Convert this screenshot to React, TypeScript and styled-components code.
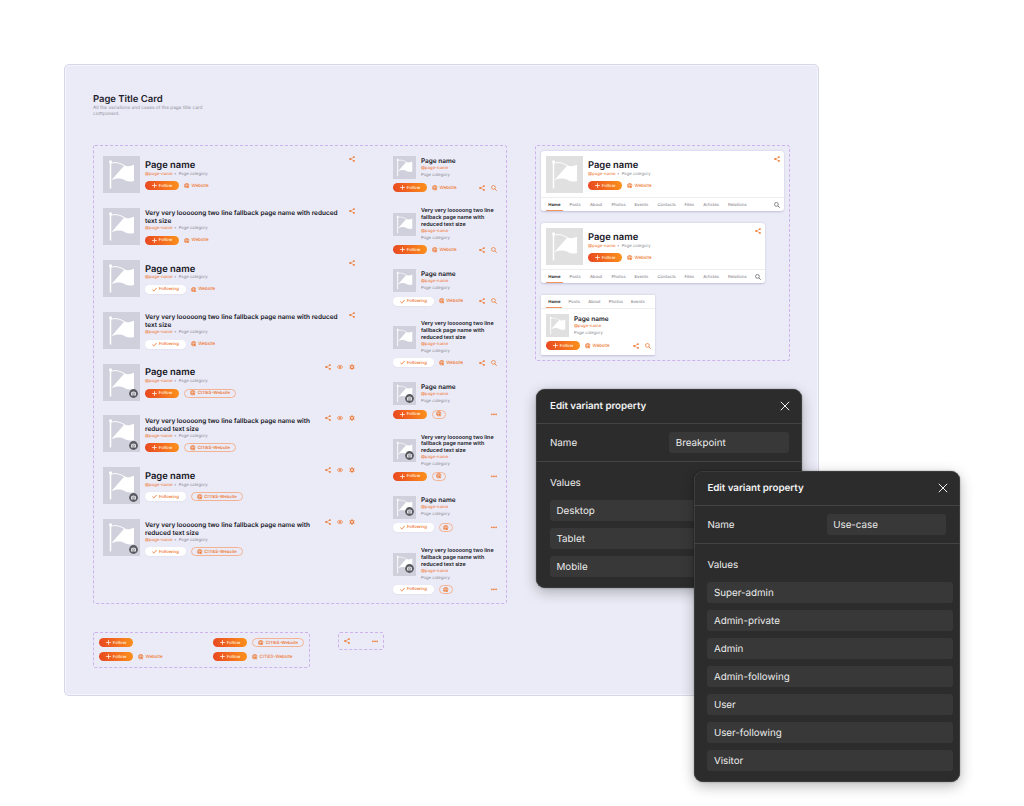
import React from "react";
import styled, { createGlobalStyle, css } from "styled-components";

const GlobalStyle = createGlobalStyle`
  body {
    margin: 0;
    background: #ffffff;
    font-family: Inter, "Liberation Sans", sans-serif;
    text-rendering: geometricPrecision;
    -webkit-font-smoothing: antialiased;
  }

  * {
    box-sizing: border-box;
  }

  svg {
    display: block;
    flex: none;
  }
`;

// layout

const Stage = styled.div`
  position: relative;
  width: 1024px;
  height: 806px;
  padding: 64px 0 0 64px;
  overflow: hidden;
`;

const Board = styled.div`
  display: flex;
  flex-direction: column;
  width: 755px;
  height: 632px;
  padding: 29px 28px 0 28px;
  border: 1px solid #d6d5ea;
  border-radius: 5px;
  background: #ebebf7;
  box-shadow: inset 0 0 0 1px #f4f4fb;
`;

const BoardTitle = styled.h1`
  margin: 0;
  font-size: 9.5px;
  line-height: 11px;
  font-weight: 600;
  letter-spacing: -0.03px;
  color: #22222c;
`;

const BoardText = styled.p`
  margin: 0;
  width: 120px;
  height: 40px;
  font-size: 4.75px;
  line-height: 6.2px;
  color: #8f8f9a;
`;

const FrameRow = styled.div<{ $gap: number }>`
  display: flex;
  align-items: flex-start;
  gap: ${(p) => p.$gap}px;
`;

const FrameStack = styled.div`
  display: flex;
  flex-direction: column;
  gap: 28px;
`;

const Frame = styled.div<{ $width: number; $height: number; $pad: string }>`
  position: relative;
  display: flex;
  width: ${(p) => p.$width}px;
  height: ${(p) => p.$height}px;
  padding: ${(p) => p.$pad};
`;

const DashedEdge = styled.svg`
  position: absolute;
  inset: 0;
`;

// page title card

const DesktopColumn = styled.div`
  display: flex;
  flex-direction: column;
  gap: 14.9px;
  width: 252px;
`;

const MobileColumn = styled.div`
  display: flex;
  flex-direction: column;
  gap: 14.8px;
  width: 103.5px;
  margin-left: 38px;
`;

const DesktopRow = styled.div`
  display: flex;
  width: 100%;
  height: 37px;
`;

const AvatarBox = styled.div<{ $size: number; $grey?: boolean }>`
  position: relative;
  flex: none;
  width: ${(p) => p.$size}px;
  height: ${(p) => p.$size}px;
  background: ${(p) => (p.$grey ? "#e0e0e0" : "#d0d0dd")};
`;

const CameraBadge = styled.div<{ $offset: number }>`
  position: absolute;
  right: ${(p) => p.$offset}px;
  bottom: ${(p) => p.$offset}px;
`;

const DesktopInfo = styled.div<{ $long?: boolean }>`
  display: flex;
  flex-direction: column;
  flex: 1;
  margin-left: 5px;
  padding-top: ${(p) => (p.$long ? 1.3 : 3.8)}px;
`;

const DesktopName = styled.div<{ $long?: boolean }>`
  color: #14141c;
  font-weight: 600;
  white-space: pre;

  ${(p) =>
    p.$long
      ? css`
          margin-bottom: 0.9px;
          font-size: 6.48px;
          line-height: 8px;
        `
      : css`
          font-size: 9.4px;
          line-height: 11.5px;
        `}
`;

const Meta = styled.div`
  display: flex;
  height: 6px;
  margin-bottom: 3.7px;
  padding-top: 0.4px;
  font-size: 4.2px;
  line-height: 6px;
  color: #85858f;
  white-space: nowrap;
`;

const Handle = styled.span`
  width: 29px;
  letter-spacing: 0.02px;
  font-weight: 500;
  color: #f0803c;
`;

const Bullet = styled.span`
  width: 4.7px;
`;

const Actions = styled.div`
  display: flex;
  align-items: center;
  gap: 4.8px;
  height: 9.2px;
`;

const Pill = styled.div<{ $kind: "follow" | "following" | "outline"; $width: number }>`
  display: flex;
  align-items: center;
  justify-content: center;
  gap: 1.8px;
  flex: none;
  width: ${(p) => p.$width}px;
  height: 9px;
  border-radius: 5px;
  font-size: 4.3px;
  line-height: 6px;
  font-weight: 600;
  color: #ee7a35;
  white-space: nowrap;

  ${(p) =>
    p.$kind === "follow" &&
    css`
      color: #ffe9da;
      background: linear-gradient(75deg, #e84a20 5%, #f36b1f 50%, #fb8f1c 95%);
    `}

  ${(p) =>
    p.$kind === "following" &&
    css`
      background: #ffffff;
      box-shadow: 0 0.5px 1px rgba(60, 60, 120, 0.08);
    `}

  ${(p) =>
    p.$kind === "outline" &&
    css`
      border: 1px solid #f3b393;
    `}
`;

const SiteLink = styled.div`
  display: flex;
  align-items: center;
  gap: 1.9px;
  font-size: 4.4px;
  line-height: 6px;
  font-weight: 500;
  color: #ee7a35;
  white-space: nowrap;
`;

const Label = styled.span`
  padding-top: 2.1px;
`;

const IconRow = styled.div`
  display: flex;
  flex: none;
  align-items: center;
  gap: 6px;
  height: 6px;
  color: #ee7a35;
`;

const Spacer = styled.div`
  flex: 1;
`;

const MobileTop = styled.div<{ $long?: boolean }>`
  display: flex;
  align-items: center;
  gap: 5px;
  margin-bottom: ${(p) => (p.$long ? 3.2 : 4.3)}px;
`;

const MobileName = styled.div<{ $long?: boolean }>`
  margin: ${(p) => (p.$long ? "0.9px 0 -0.9px" : "0")};
  font-size: ${(p) => (p.$long ? 5.38 : 6.45)}px;
  line-height: ${(p) => (p.$long ? 6.9 : 8)}px;
  font-weight: 600;
  color: #14141c;
  white-space: pre;
`;

const MobileMeta = styled.div<{ $orange?: boolean }>`
  font-size: 4.2px;
  line-height: 7px;
  font-weight: ${(p) => (p.$orange ? 500 : 400)};
  color: ${(p) => (p.$orange ? "#f0803c" : "#85858f")};
`;

// cards with tabs

const CardColumn = styled.div`
  display: flex;
  flex-direction: column;
  gap: 12px;
`;

const Card = styled.div<{ $width: number; $square?: boolean }>`
  display: flex;
  flex-direction: column;
  width: ${(p) => p.$width}px;
  height: 60px;
  border-radius: ${(p) => (p.$square ? 1 : 3)}px;
  background: #ffffff;
  box-shadow: 0 0.5px 2px rgba(70, 60, 130, 0.25);
`;

const CardBody = styled.div`
  display: flex;
  height: 46px;
  padding: 5px 4.5px 0 5px;
`;

const Tabs = styled.div<{ $bottom?: boolean }>`
  display: flex;
  height: 14px;
  padding: 0 4.5px 0 5px;
  border-top: ${(p) => (p.$bottom ? "none" : "1px solid #eeeef0")};
  border-bottom: ${(p) => (p.$bottom ? "1px solid #eeeef0" : "none")};
`;

const Tab = styled.div<{ $active?: boolean; $width: number }>`
  width: ${(p) => p.$width}px;
  padding: 1px 0 0 2.3px;
  font-size: 4.2px;
  line-height: 13.8px;
  font-weight: ${(p) => (p.$active ? 700 : 500)};
  letter-spacing: 0.06px;
  color: ${(p) => (p.$active ? "#2a2a30" : "#85858c")};
  border-bottom: 1px solid ${(p) => (p.$active ? "#f0935f" : "transparent")};
`;

const TabGap = styled.div`
  width: 4.7px;
`;

const TabSearch = styled.div`
  display: flex;
  align-items: center;
  margin-left: auto;
  color: #66666c;
`;

const MobileCardBody = styled.div`
  padding: 5px 4px 0 5px;
`;

// dialogs

const Dialog = styled.section<{ $x: number; $y: number; $height: number }>`
  position: absolute;
  left: ${(p) => p.$x}px;
  top: ${(p) => p.$y}px;
  width: 266px;
  height: ${(p) => p.$height}px;
  border-radius: 9px;
  background: #2c2c2c;
  color: #ececec;
  font-size: 9.8px;
  box-shadow: inset 0 0 0 0.6px #4a4a4a, 0 0 2px rgba(0, 0, 0, 0.35),
    0 4px 14px rgba(0, 0, 0, 0.28);
`;

const DialogHeader = styled.header`
  display: flex;
  align-items: center;
  justify-content: space-between;
  height: 35px;
  padding: 0 12px 0 13.7px;
  border-bottom: 1px solid #444444;
  font-weight: 600;
  letter-spacing: -0.04px;
  color: #f2f2f2;
`;

const DialogLabel = styled.span`
  padding-top: 1px;
`;

const DialogName = styled.div`
  display: flex;
  align-items: center;
  justify-content: space-between;
  height: 38px;
  padding: 0 13.5px 0 13.7px;
  border-bottom: 1px solid #444444;
`;

const Field = styled.div<{ $width?: number }>`
  width: ${(p) => (p.$width ? `${p.$width}px` : "auto")};
  height: 21px;
  padding-left: 6.5px;
  border-radius: 3px;
  background: #383838;
  line-height: 23.6px;
`;

const DialogValues = styled.div`
  display: flex;
  flex-direction: column;
  gap: 7px;
  padding: 15px 7px 0 13.7px;
`;

const ValuesLabel = styled.div`
  height: 16px;
  line-height: 14.4px;
`;

// icons

const ShareIcon = () => (
  <svg width="6" height="6" viewBox="0 0 12 12" fill="currentColor">
    <path d="M10 2.2 2.4 6 10 9.8" fill="none" stroke="currentColor" strokeWidth="1.2" />
    <circle cx="9.8" cy="2.2" r="1.9" />
    <circle cx="2.2" cy="6" r="1.9" />
    <circle cx="9.8" cy="9.8" r="1.9" />
  </svg>
);

const SearchIcon = () => (
  <svg width="6" height="6" viewBox="0 0 12 12" fill="none" stroke="currentColor">
    <circle cx="4.8" cy="4.8" r="3.8" strokeWidth="1.5" />
    <path d="m7.5 7.5 4 4" strokeWidth="1.7" />
  </svg>
);

const EyeIcon = () => (
  <svg width="6" height="6" viewBox="0 0 12 12">
    <path
      d="M.7 6C3 1.6 9 1.6 11.3 6 9 10.4 3 10.4.7 6z"
      fill="none"
      stroke="currentColor"
      strokeWidth="1.5"
    />
    <circle cx="6" cy="6" r="1.9" fill="currentColor" />
  </svg>
);

const GearIcon = () => (
  <svg width="6" height="6" viewBox="0 0 12 12" fill="none" stroke="currentColor">
    <circle cx="6" cy="6" r="3.1" strokeWidth="2.3" />
    <path
      d="M6 .5v2M6 9.5v2M1.2 3.2 3 4.3M9 7.7l1.8 1.1M1.2 8.8 3 7.7M9 4.3l1.8-1.1"
      strokeWidth="2.2"
    />
  </svg>
);

const MoreIcon = () => (
  <svg width="6" height="6" viewBox="0 0 12 12" fill="currentColor">
    <circle cx="1.8" cy="6.6" r="1.7" />
    <circle cx="6" cy="6.6" r="1.7" />
    <circle cx="10.2" cy="6.6" r="1.7" />
  </svg>
);

const GlobeIcon = () => (
  <svg width="5.5" height="5.5" viewBox="0 0 12 12">
    <path
      d="M6 .8a5.2 5.2 0 1 0 0 10.4M6 .8a5.2 5.2 0 0 1 5.2 5.2M1 4.2h9.8M1 7.6h5M6 .8C3 4 3 8 5.6 11.2M6 .8c1.6 1.4 2.3 3 2.4 5"
      fill="none"
      stroke="currentColor"
      strokeWidth="1.3"
    />
    <path d="m5.6 5.6 6 2.2-2.3 1.1 2 2-1 1-2-2-1 2.1z" fill="currentColor" />
  </svg>
);

const PlusIcon = () => (
  <svg width="5" height="5" viewBox="0 0 10 10" stroke="currentColor" strokeWidth="1.7">
    <path d="M5 .3v9.4M.3 5h9.4" />
  </svg>
);

const CheckIcon = () => (
  <svg width="5" height="5" viewBox="0 0 10 10" fill="none" stroke="currentColor">
    <path d="m.8 5.4 2.8 2.7 5.6-6.2" strokeWidth="1.8" />
  </svg>
);

const CloseIcon = () => (
  <svg width="10" height="10" viewBox="0 0 10 10" stroke="#f0f0f0" strokeWidth="1">
    <path d="m.8.8 8.4 8.4M9.2.8.8 9.2" />
  </svg>
);

const FlagIcon = ({ size }: { size: number }) => (
  <svg width={size} height={size} viewBox="0 0 37 37">
    <path d="M7.5 5v27.5" stroke="#fff" strokeWidth="1.5" />
    <circle cx="7.5" cy="5.8" r="1.5" fill="#fff" />
    <path
      d="M8 7.4C12.5 5.6 17 7 22 10"
      fill="none"
      stroke="#fff"
      strokeWidth="1"
    />
    <path
      d="M21.3 9.6C24.5 11 28 10 31 8.7v16.2c-3.2 1-5.8.8-8.6-.5C18 22 13.5 22 8.2 24.6z"
      fill="#fff"
    />
  </svg>
);

const CameraIcon = () => (
  <svg width="9" height="9" viewBox="0 0 18 18">
    <circle cx="9" cy="9" r="8.8" fill="#595a60" />
    <path d="M4 6.4h2.3l1-1.5h3.4l1 1.5H14v6.8H4z" fill="#dedee4" />
    <circle cx="9" cy="9.6" r="2" fill="#dedee4" stroke="#595a60" strokeWidth="1" />
  </svg>
);

// components

type TitleProps = {
  long?: boolean;
  following?: boolean;
  admin?: boolean;
  grey?: boolean;
};

const Avatar = ({ size, admin, grey }: { size: number; admin?: boolean; grey?: boolean }) => (
  <AvatarBox $size={size} $grey={grey}>
    <FlagIcon size={size} />
    {admin && (
      <CameraBadge $offset={size > 30 ? 2.4 : 2.2}>
        <CameraIcon />
      </CameraBadge>
    )}
  </AvatarBox>
);

const FollowButton = ({ following }: { following?: boolean }) =>
  following ? (
    <Pill $kind="following" $width={41}>
      <CheckIcon />
      <Label>Following</Label>
    </Pill>
  ) : (
    <Pill $kind="follow" $width={34.3}>
      <PlusIcon />
      <Label>Follow</Label>
    </Pill>
  );

const Website = ({ label = "Website" }: { label?: string }) => (
  <SiteLink>
    <GlobeIcon />
    <Label>{label}</Label>
  </SiteLink>
);

const CitiesButton = () => (
  <Pill $kind="outline" $width={52.3}>
    <GlobeIcon />
    <Label>CITIES-Website</Label>
  </Pill>
);

const DesktopTitle = ({ long, following, admin, grey }: TitleProps) => {
  const longName = admin
    ? "Very very looooong two line fallback page name with\nreduced text size"
    : "Very very looooong two line fallback page name with reduced\ntext size";

  return (
    <DesktopRow>
      <Avatar size={37} admin={admin} grey={grey} />
      <DesktopInfo $long={long}>
        <DesktopName $long={long}>{long ? longName : "Page name"}</DesktopName>
        <Meta>
          <Handle>@page-name</Handle>
          <Bullet>•</Bullet>
          Page category
        </Meta>
        <Actions>
          <FollowButton following={following} />
          {admin ? <CitiesButton /> : <Website />}
        </Actions>
      </DesktopInfo>
      <IconRow>
        <ShareIcon />
        {admin && <EyeIcon />}
        {admin && <GearIcon />}
      </IconRow>
    </DesktopRow>
  );
};

const MobileTitle = ({ long, following, admin, grey }: TitleProps) => (
  <div>
    <MobileTop $long={long}>
      <Avatar size={23} admin={admin} grey={grey} />
      <div>
        <MobileName $long={long}>
          {long
            ? "Very very looooong two line\nfallback page name with\nreduced text size"
            : "Page name"}
        </MobileName>
        <MobileMeta $orange>@page-name</MobileMeta>
        <MobileMeta>Page category</MobileMeta>
      </div>
    </MobileTop>
    <Actions>
      <FollowButton following={following} />
      {admin ? (
        <Pill $kind="outline" $width={14}>
          <GlobeIcon />
        </Pill>
      ) : (
        <Website />
      )}
      <Spacer />
      <IconRow>
        {admin ? (
          <MoreIcon />
        ) : (
          <>
            <ShareIcon />
            <SearchIcon />
          </>
        )}
      </IconRow>
    </Actions>
  </div>
);

const tabs = [
  { label: "Home", width: 16.5 },
  { label: "Posts", width: 15.8 },
  { label: "About", width: 16.8 },
  { label: "Photos", width: 18.4 },
  { label: "Events", width: 18.2 },
  { label: "Contacts", width: 22.3 },
  { label: "Files", width: 14.2 },
  { label: "Articles", width: 20 },
  { label: "Relations", width: 18 },
];

const TabBar = ({ count, bottom }: { count: number; bottom?: boolean }) => (
  <Tabs $bottom={bottom}>
    {tabs.slice(0, count).map((tab, index) => (
      <React.Fragment key={tab.label}>
        <Tab $active={index === 0} $width={tab.width}>
          {tab.label}
        </Tab>
        <TabGap />
      </React.Fragment>
    ))}
    {!bottom && (
      <TabSearch>
        <SearchIcon />
      </TabSearch>
    )}
  </Tabs>
);

const variants: TitleProps[] = [
  {},
  { long: true },
  { following: true },
  { following: true, long: true },
  { admin: true },
  { admin: true, long: true },
  { admin: true, following: true },
  { admin: true, following: true, long: true },
];

const Dashes = ({ width, height }: { width: number; height: number }) => (
  <DashedEdge width={width} height={height}>
    <rect
      x="0.5"
      y="0.5"
      width={width - 1}
      height={height - 1}
      rx="1.5"
      fill="none"
      stroke="#cdb2ec"
      strokeWidth="1"
      strokeDasharray="3 2"
    />
  </DashedEdge>
);

const DashedFrame = (props: {
  width: number;
  height: number;
  pad: string;
  children: React.ReactNode;
}) => (
  <Frame $width={props.width} $height={props.height} $pad={props.pad}>
    <Dashes width={props.width} height={props.height} />
    {props.children}
  </Frame>
);

const ButtonColumn = styled.div<{ $width: number }>`
  display: flex;
  flex-direction: column;
  gap: 5.2px;
  width: ${(p) => p.$width}px;
`;

const WideIconRow = styled(IconRow)`
  gap: 22px;
`;

type VariantDialogProps = {
  x: number;
  y: number;
  height: number;
  name: string;
  values: string[];
};

const VariantDialog = ({ x, y, height, name, values }: VariantDialogProps) => (
  <Dialog $x={x} $y={y} $height={height}>
    <DialogHeader>
      <DialogLabel>Edit variant property</DialogLabel>
      <CloseIcon />
    </DialogHeader>
    <DialogName>
      <DialogLabel>Name</DialogLabel>
      <Field $width={119.5}>{name}</Field>
    </DialogName>
    <DialogValues>
      <ValuesLabel>Values</ValuesLabel>
      {values.map((value) => (
        <Field key={value}>{value}</Field>
      ))}
    </DialogValues>
  </Dialog>
);

const App = () => {
  return (
    <>
      <GlobalStyle />
      <Stage>
        <Board>
          <BoardTitle>Page Title Card</BoardTitle>
          <BoardText>
            All the variations and cases of the page title card
            <br />
            component.
          </BoardText>
          <FrameRow $gap={28}>
            <FrameStack>
              <DashedFrame width={414} height={459} pad="11px 0 0 10px">
                <DesktopColumn>
                  {variants.map((variant, index) => (
                    <DesktopTitle key={index} {...variant} />
                  ))}
                </DesktopColumn>
                <MobileColumn>
                  {variants.map((variant, index) => (
                    <MobileTitle key={index} {...variant} />
                  ))}
                </MobileColumn>
              </DashedFrame>
              <FrameRow $gap={28}>
                <DashedFrame width={217} height={36} pad="6px 0 0 6px">
                  <ButtonColumn $width={114}>
                    <Actions>
                      <FollowButton />
                    </Actions>
                    <Actions>
                      <FollowButton />
                      <Website />
                    </Actions>
                  </ButtonColumn>
                  <ButtonColumn $width={92}>
                    <Actions>
                      <FollowButton />
                      <CitiesButton />
                    </Actions>
                    <Actions>
                      <FollowButton />
                      <Website label="CITIES-Website" />
                    </Actions>
                  </ButtonColumn>
                </DashedFrame>
                <DashedFrame width={46} height={18} pad="6px 0 0 6px">
                  <WideIconRow>
                    <ShareIcon />
                    <MoreIcon />
                  </WideIconRow>
                </DashedFrame>
              </FrameRow>
            </FrameStack>
            <DashedFrame width={255} height={216} pad="6px 0 0 6px">
              <CardColumn>
                <Card $width={243}>
                  <CardBody>
                    <DesktopTitle grey />
                  </CardBody>
                  <TabBar count={9} />
                </Card>
                <Card $width={224}>
                  <CardBody>
                    <DesktopTitle grey />
                  </CardBody>
                  <TabBar count={9} />
                </Card>
                <Card $width={114} $square>
                  <TabBar count={5} bottom />
                  <MobileCardBody>
                    <MobileTitle grey />
                  </MobileCardBody>
                </Card>
              </CardColumn>
            </DashedFrame>
          </FrameRow>
        </Board>

        <VariantDialog
          x={536.3}
          y={389.4}
          height={198.6}
          name="Breakpoint"
          values={["Desktop", "Tablet", "Mobile"]}
        />
        <VariantDialog
          x={693.7}
          y={471.2}
          height={310.8}
          name="Use-case"
          values={[
            "Super-admin",
            "Admin-private",
            "Admin",
            "Admin-following",
            "User",
            "User-following",
            "Visitor",
          ]}
        />
      </Stage>
    </>
  );
};

export default App;
